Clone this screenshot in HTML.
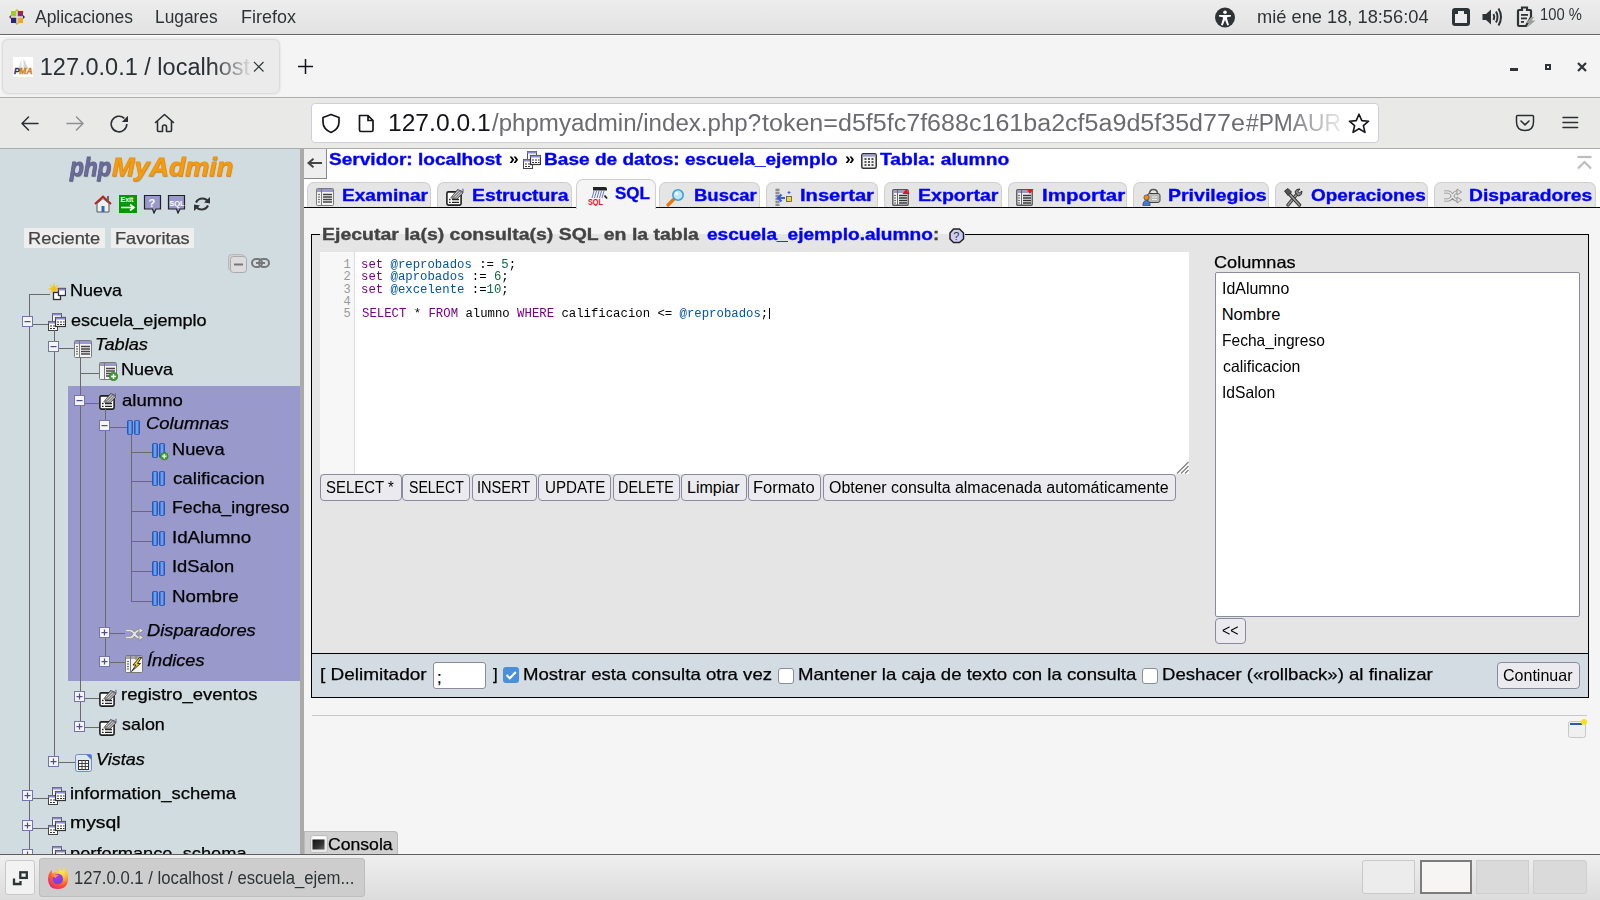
<!DOCTYPE html>
<html><head><meta charset="utf-8"><title>phpMyAdmin</title>
<style>
html,body{margin:0;padding:0;width:1600px;height:900px;overflow:hidden;background:#f5f5f5;font-family:"Liberation Sans",sans-serif;}
.a{position:absolute;box-sizing:border-box;}
.t{position:absolute;white-space:nowrap;line-height:1;transform-origin:0 0;}
</style></head><body>
<div class="a" style="left:0px;top:0px;width:1600px;height:34px;background:linear-gradient(#ededed,#e2e2e2);"></div>
<div class="a" style="left:0px;top:34px;width:1600px;height:1px;background:#666666;"></div>
<div class="a" style="left:0px;top:35px;width:1600px;height:1px;background:#ffffff;"></div>
<svg class="a" style="left:8px;top:8px;" width="18" height="18" viewBox="0 0 18 18">
<g transform="rotate(45 9 9)">
<polygon points="9,0 11,2 7,2" fill="#efa724"/>
</g>
<polygon points="9,1 11,3 7,3" fill="#efa724"/>
<polygon points="9,17 11,15 7,15" fill="#9ccd2a"/>
<polygon points="1,9 3,7 3,11" fill="#932279"/>
<polygon points="17,9 15,7 15,11" fill="#262577"/>
<rect x="3" y="3" width="5.5" height="5.5" fill="#9ccd2a"/>
<rect x="9.5" y="3" width="5.5" height="5.5" fill="#932279"/>
<rect x="3" y="9.5" width="5.5" height="5.5" fill="#262577"/>
<rect x="9.5" y="9.5" width="5.5" height="5.5" fill="#efa724"/>
<rect x="3" y="8.5" width="12" height="1" fill="#ddd"/>
<rect x="8.5" y="3" width="1" height="12" fill="#ddd"/>
</svg>
<span class="t" style="left:35.10px;top:8px;color:#2e3436;font-size:18.5px;font-family:'Liberation Sans',sans-serif;transform:scaleX(0.9437);">Aplicaciones</span>
<span class="t" style="left:154.66px;top:8px;color:#2e3436;font-size:18.5px;font-family:'Liberation Sans',sans-serif;transform:scaleX(0.9369);">Lugares</span>
<span class="t" style="left:240.93px;top:8px;color:#2e3436;font-size:18.5px;font-family:'Liberation Sans',sans-serif;transform:scaleX(0.9709);">Firefox</span>
<svg class="a" style="left:1214px;top:7px;" width="22" height="22" viewBox="0 0 22 22"><circle cx="11" cy="10.5" r="10" fill="#2e3436"/>
<circle cx="11" cy="5.3" r="1.8" fill="#fff"/>
<path d="M5,8 L17,8 L17,9.6 L13,10.2 L13.2,12 L15,18 L13.3,18.4 L11,13 L8.7,18.4 L7,18 L8.8,12 L9,10.2 L5,9.6Z" fill="#fff"/></svg>
<span class="t" style="left:1257.01px;top:8px;color:#2e3436;font-size:18.5px;font-family:'Liberation Sans',sans-serif;transform:scaleX(0.9870);">mié ene 18, 18:56:04</span>
<svg class="a" style="left:1451px;top:7px;" width="20" height="20" viewBox="0 0 20 20"><rect x="1" y="1" width="18" height="18" rx="3" fill="#2e3436"/><path d="M4,7 L7,7 L7,4 L13,4 L13,7 L16,7 L16,16 L4,16Z" fill="#ececec"/></svg>
<svg class="a" style="left:1481px;top:7px;" width="23" height="20" viewBox="0 0 23 20"><path d="M1.5,7 L5,7 L10,2.5 L10,17.5 L5,13 L1.5,13Z" fill="#2e3436"/>
<path d="M12.5,7 Q14,10 12.5,13" stroke="#2e3436" stroke-width="2" fill="none"/>
<path d="M15,4.5 Q18,10 15,15.5" stroke="#2e3436" stroke-width="2" fill="none"/>
<path d="M17.5,1.5 Q22.5,10 17.5,18.5" stroke="#2e3436" stroke-width="2" fill="none"/></svg>
<svg class="a" style="left:1516px;top:6px;" width="21" height="22" viewBox="0 0 21 22"><path d="M3,4 L6,4 L6,1.5 L11,1.5 L11,4 L14,4 Q15,4 15,5 L15,11 L10,20 L3,20 Q2,20 2,19 L2,5 Q2,4 3,4Z" fill="none" stroke="#2e3436" stroke-width="2.2"/>
<rect x="5" y="8" width="7" height="1.8" fill="#2e3436"/><rect x="5" y="11.5" width="6" height="1.8" fill="#2e3436"/><rect x="5" y="15" width="3" height="1.8" fill="#2e3436"/>
<path d="M15.5,11 L10,17 L13.5,17 L11,21.5 L19.5,14.5 L15.5,14.5 L18,11Z" fill="#9a9c98"/></svg>
<span class="t" style="left:1539.58px;top:7px;color:#2e3436;font-size:16px;font-family:'Liberation Sans',sans-serif;transform:scaleX(0.9205);">100 %</span>
<div class="a" style="left:0px;top:36px;width:1600px;height:61px;background:#f4f4f4;"></div>
<div class="a" style="left:3px;top:40px;width:276px;height:53px;background:#ebebeb;border-radius:5px;box-shadow:0 0 3px rgba(0,0,0,.28);"></div>
<div class="a" style="left:0px;top:97px;width:1600px;height:1px;background:#adadad;"></div>
<div class="a" style="left:0px;top:98px;width:1600px;height:50px;background:#e9e9e8;"></div>
<div class="a" style="left:0px;top:148px;width:1600px;height:1px;background:#acacac;"></div>
<svg class="a" style="left:13px;top:57px;" width="20" height="20" viewBox="0 0 20 20"><rect x="0" y="0" width="20" height="20" fill="#fff"/>
<path d="M8.5,2 L5,12 L8.5,12Z" fill="#dedede"/><path d="M10.5,1.5 L10.5,12 L15.5,12Z" fill="#d6d6d6"/>
<text x="1" y="17.3" font-family="Liberation Sans" font-weight="700" font-style="italic" font-size="8.5" fill="#2f2f6e" stroke="#2f2f6e" stroke-width="0.3">P</text>
<text x="6.3" y="17.3" font-family="Liberation Sans" font-weight="700" font-style="italic" font-size="8.5" fill="#e88a0c" stroke="#b86a00" stroke-width="0.3">MA</text></svg>
<div class="a" style="left:0;top:35px;width:290px;height:62px;-webkit-mask-image:linear-gradient(90deg,#000 212px,rgba(0,0,0,.08) 250px);mask-image:linear-gradient(90deg,#000 212px,rgba(0,0,0,.08) 250px);">
<span class="t" style="left:39.75px;top:21px;color:#2b3033;font-size:23.5px;font-family:'Liberation Sans',sans-serif;">127.0.0.1 / localhost</span>
</div>
<svg class="a" style="left:253px;top:61px;" width="12" height="12" viewBox="0 0 12 12"><path d="M1,1 L10.5,10.5 M10.5,1 L1,10.5" stroke="#2e3436" stroke-width="1.1"/></svg>
<svg class="a" style="left:297px;top:58px;" width="17" height="17" viewBox="0 0 17 17"><path d="M8.5,1 L8.5,16 M1,8.5 L16,8.5" stroke="#15141a" stroke-width="1.5"/></svg>
<div class="a" style="left:1510px;top:68px;width:8px;height:3px;background:#2e3436;"></div>
<div class="a" style="left:1545px;top:64px;width:6px;height:6px;border:2px solid #2e3436;"></div>
<svg class="a" style="left:1577px;top:62px;" width="10" height="10" viewBox="0 0 10 10"><path d="M1,1 L9,9 M9,1 L1,9" stroke="#2e3436" stroke-width="2.2"/></svg>
<svg class="a" style="left:19px;top:113px;" width="22" height="21" viewBox="0 0 22 21"><path d="M19,10.5 L3,10.5 M9.5,4 L3,10.5 L9.5,17" fill="none" stroke="#2b2f33" stroke-width="1.5" stroke-linejoin="round" stroke-linecap="round"/></svg>
<svg class="a" style="left:64px;top:113px;" width="22" height="21" viewBox="0 0 22 21"><path d="M3,10.5 L19,10.5 M12.5,4 L19,10.5 L12.5,17" fill="none" stroke="#8f9093" stroke-width="1.5" stroke-linejoin="round" stroke-linecap="round"/></svg>
<svg class="a" style="left:109px;top:113px;" width="22" height="22" viewBox="0 0 22 22"><path d="M17.8,11 A7.8,7.8 0 1 1 15.4,5.4" fill="none" stroke="#2b2f33" stroke-width="1.6"/><path d="M19,2.8 L19,9 L12.8,9Z" fill="#2b2f33"/></svg>
<svg class="a" style="left:153px;top:112px;" width="23" height="22" viewBox="0 0 23 22"><path d="M2.5,10.5 L11.5,2.5 L20.5,10.5 M4.5,9 L4.5,18.5 Q4.5,19.5 5.5,19.5 L9.5,19.5 L9.5,15 Q9.5,13 11.5,13 Q13.5,13 13.5,15 L13.5,19.5 L17.5,19.5 Q18.5,19.5 18.5,18.5 L18.5,9" fill="none" stroke="#2b2f33" stroke-width="1.6" stroke-linejoin="round" stroke-linecap="round"/></svg>
<div class="a" style="left:311px;top:103px;width:1068px;height:40px;background:#fff;border:1px solid #cfcfd8;border-radius:4px;"></div>
<svg class="a" style="left:320px;top:112px;" width="22" height="22" viewBox="0 0 22 22"><path d="M11,2.5 L19,5.5 L19,10 Q19,17 11,20.5 Q3,17 3,10 L3,5.5Z" fill="none" stroke="#15141a" stroke-width="1.7" stroke-linejoin="round"/></svg>
<svg class="a" style="left:357px;top:113px;" width="19" height="21" viewBox="0 0 19 21"><path d="M2.5,2.5 L11,2.5 L16,7.5 L16,17 Q16,18.5 14.5,18.5 L4,18.5 Q2.5,18.5 2.5,17Z M11,2.5 L11,7.5 L16,7.5" fill="none" stroke="#15141a" stroke-width="1.7" stroke-linejoin="round"/></svg>
<span class="t" style="left:388.45px;top:112px;color:#15141a;font-size:23.5px;font-family:'Liberation Sans',sans-serif;transform:scaleX(1.0469);">127.0.0.1</span>
<div class="a" style="left:0;top:98px;width:1345px;height:50px;-webkit-mask-image:linear-gradient(90deg,#000 1285px,rgba(0,0,0,.12) 1342px);mask-image:linear-gradient(90deg,#000 1285px,rgba(0,0,0,.12) 1342px);">
<span class="t" style="left:492.00px;top:14px;color:#6b6b70;font-size:23.5px;font-family:'Liberation Sans',sans-serif;transform:scaleX(1.0248);">/phpmyadmin/index.php?</span>
<span class="t" style="left:762.00px;top:14px;color:#6b6b70;font-size:23.5px;font-family:'Liberation Sans',sans-serif;transform:scaleX(1.0664);">token=d5f5fc7f688c161ba2cf5a9d5f35d77e</span>
<span class="t" style="left:1246.00px;top:14px;color:#6b6b70;font-size:23.5px;font-family:'Liberation Sans',sans-serif;transform:scaleX(0.9691);">#PMAUR</span>
</div>
<svg class="a" style="left:1347px;top:112px;" width="24" height="23" viewBox="0 0 24 23"><path d="M12,2.2 L14.8,8.6 L21.6,9.2 L16.4,13.7 L18,20.4 L12,16.8 L6,20.4 L7.6,13.7 L2.4,9.2 L9.2,8.6Z" fill="none" stroke="#15141a" stroke-width="1.6" stroke-linejoin="round"/></svg>
<svg class="a" style="left:1514px;top:113px;" width="22" height="20" viewBox="0 0 22 20"><path d="M3.5,2.5 L18.5,2.5 Q19.5,2.5 19.5,3.5 L19.5,9 Q19.5,17.5 11,17.5 Q2.5,17.5 2.5,9 L2.5,3.5 Q2.5,2.5 3.5,2.5Z" fill="none" stroke="#2b2f33" stroke-width="1.5"/><path d="M7,8 L11,11.8 L15,8" fill="none" stroke="#2b2f33" stroke-width="1.6" stroke-linecap="round" stroke-linejoin="round"/></svg>
<svg class="a" style="left:1561px;top:114px;" width="19" height="16" viewBox="0 0 19 16"><path d="M2,3.4 h14.6 M2,8.4 h14.6 M2,13.4 h14.6" stroke="#2b2f33" stroke-width="1.5" stroke-linecap="round"/></svg>
<div class="a" style="left:0px;top:149px;width:300px;height:706px;background:#d0dce0;"></div>
<div class="a" style="left:300px;top:149px;width:4px;height:706px;background:#aaaaaa;"></div>
<div class="a" style="left:304px;top:149px;width:1296px;height:706px;background:#f5f5f5;"></div>
<span class="t" style="left:69.85px;top:154px;color:#6c6c9c;font-size:26.5px;font-family:'Liberation Sans',sans-serif;font-weight:700;font-style:italic;transform:scaleX(0.8490);-webkit-text-stroke:1px #63638f;text-shadow:0.5px 0.5px 1px rgba(0,0,0,.45);">php</span>
<span class="t" style="left:111.50px;top:154px;color:#f89c0e;font-size:26.5px;font-family:'Liberation Sans',sans-serif;font-weight:700;font-style:italic;transform:scaleX(1.0169);-webkit-text-stroke:1px #e8920e;text-shadow:0.5px 0.5px 1px rgba(90,50,0,.5);">MyAdmin</span>
<svg class="a" style="left:94px;top:195px;" width="18" height="18" viewBox="0 0 18 18"><path d="M1,9 L9,1.5 L17,9" fill="none" stroke="#c0201a" stroke-width="2"/><rect x="13" y="1" width="2" height="5" fill="#666"/>
<path d="M3,8.5 L9,3.5 L15,8.5 L15,17 L3,17Z" fill="#f0f0f0" stroke="#555" stroke-width="1"/><rect x="7.5" y="11" width="3" height="6" fill="#2f6db5"/></svg>
<svg class="a" style="left:119px;top:195px;" width="18" height="18" viewBox="0 0 18 18"><rect x="0" y="0" width="18" height="18" fill="#009a00"/><text x="1.5" y="7.2" font-family="Liberation Sans" font-weight="700" font-size="7" fill="#fff">Exit</text>
<path d="M2,12.5 L14,12.5 M11,9.5 L15,12.5 L11,15.5" fill="none" stroke="#fff" stroke-width="1.6"/></svg>
<svg class="a" style="left:143px;top:194px;" width="19" height="20" viewBox="0 0 19 20"><path d="M1.5,1.5 L17.5,1.5 L17.5,15 L13,15 L11,19 L9.5,15 L1.5,15Z" fill="#9999cc" stroke="#222" stroke-width="1.2"/>
<text x="5.5" y="12.5" font-family="Liberation Sans" font-weight="700" font-size="11" fill="#fff">?</text></svg>
<svg class="a" style="left:167px;top:194px;" width="19" height="20" viewBox="0 0 19 20"><path d="M1.5,1.5 L17.5,1.5 L17.5,15 L13,15 L11,19 L9.5,15 L1.5,15Z" fill="#9999cc" stroke="#222" stroke-width="1.2"/>
<text x="2.2" y="11.5" font-family="Liberation Sans" font-weight="700" font-size="7.5" fill="#fff">SQL</text></svg>
<svg class="a" style="left:193px;top:196px;" width="18" height="16" viewBox="0 0 18 16"><path d="M3,6.5 Q5,2.5 9.5,2.5 Q13,2.5 14.5,5" fill="none" stroke="#333" stroke-width="2.2"/><path d="M17,1 L17,7.5 L11,6.5Z" fill="#333"/>
<path d="M15,9.5 Q13,13.5 8.5,13.5 Q5,13.5 3.5,11" fill="none" stroke="#333" stroke-width="2.2"/><path d="M1,15 L1,8.5 L7,9.5Z" fill="#333"/></svg>
<div class="a" style="left:24px;top:228px;width:81px;height:20px;background:#eeeeee;"></div>
<span class="t" style="left:27.79px;top:230px;color:#444;font-size:16.5px;font-family:'Liberation Sans',sans-serif;transform:scaleX(1.1063);-webkit-text-stroke-width:0.25px;">Reciente</span>
<div class="a" style="left:111px;top:228px;width:83px;height:20px;background:#eeeeee;"></div>
<span class="t" style="left:114.50px;top:230px;color:#444;font-size:16.5px;font-family:'Liberation Sans',sans-serif;transform:scaleX(1.1000);-webkit-text-stroke-width:0.25px;">Favoritas</span>
<svg class="a" style="left:227px;top:253px;" width="21" height="21" viewBox="0 0 21 21"><rect x="1.5" y="1.5" width="16" height="16" rx="3" fill="#d0d0d0" stroke="#b8b8b8"/><rect x="3.5" y="3.5" width="16" height="16" rx="3" fill="#dcdcdc" stroke="#aaa"/><rect x="7" y="10.5" width="9" height="2" fill="#777"/></svg>
<svg class="a" style="left:251px;top:257px;" width="20" height="12" viewBox="0 0 20 12"><rect x="1" y="2" width="10" height="8" rx="4" fill="none" stroke="#777" stroke-width="2"/><rect x="8" y="2" width="10" height="8" rx="4" fill="none" stroke="#777" stroke-width="2"/><rect x="5" y="5" width="9" height="2" fill="#777"/></svg>
<div class="a" style="left:29px;top:294px;width:1px;height:559px;background:#6a6a6a;"></div>
<div class="a" style="left:29px;top:294px;width:21px;height:1px;background:#6a6a6a;"></div>
<svg class="a" style="left:47px;top:282px;" width="19" height="19" viewBox="0 0 19 19"><path d="M7,0 L8,5 L12,2 L9,6 L14,7 L9,8 L12,12 L8,9 L7,14 L6,9 L2,12 L5,8 L0,7 L5,6 L2,2 L6,5Z" fill="#f5c211"/>
<rect x="6.5" y="10.5" width="7" height="7" fill="#fff" stroke="#333" stroke-width="1.3"/><rect x="11.5" y="6.5" width="7" height="7" fill="#fff" stroke="#333" stroke-width="1.3"/><rect x="11.5" y="6.5" width="7" height="2" fill="#8c8ccc"/></svg>
<span class="t" style="left:69.71px;top:282px;color:#000;font-size:16.5px;font-family:'Liberation Sans',sans-serif;transform:scaleX(1.0894);-webkit-text-stroke-width:0.25px;">Nueva</span>
<div class="a" style="left:33px;top:324px;width:16px;height:1px;background:#6a6a6a;"></div>
<svg class="a" style="left:22px;top:316px;" width="11" height="11" viewBox="0 0 11 11"><rect x="0.5" y="0.5" width="10" height="10" fill="#f4f4fa" stroke="#7474b0"/><rect x="2.5" y="5" width="6" height="1.2" fill="#505080"/></svg>
<svg class="a" style="left:48px;top:313px;" width="18" height="18" viewBox="0 0 18 18"><rect x="4.5" y="0.5" width="9" height="8" fill="#fff" stroke="#555"/><rect x="4.5" y="0.5" width="9" height="2" fill="#8c8ccc"/>
<rect x="0.5" y="8.5" width="9" height="9" fill="#fff" stroke="#444"/><rect x="0.5" y="8.5" width="9" height="2" fill="#8c8ccc"/>
<rect x="7.5" y="4.5" width="10" height="9" fill="#fff" stroke="#333" stroke-width="1.2"/><rect x="7.5" y="4.5" width="10" height="2" fill="#8c8ccc"/>
<path d="M9,9 h2 M12,9 h2 M15,9 h1.5 M9,11.5 h2 M12,11.5 h2 M15,11.5 h1.5 M2,13 h2 M5,13 h2 M2,15.5 h2 M5,15.5 h2" stroke="#333" stroke-width="1"/></svg>
<span class="t" style="left:70.80px;top:312px;color:#000;font-size:16.5px;font-family:'Liberation Sans',sans-serif;transform:scaleX(1.0952);-webkit-text-stroke-width:0.25px;">escuela_ejemplo</span>
<div class="a" style="left:54px;top:330px;width:1px;height:430px;background:#6a6a6a;"></div>
<div class="a" style="left:59px;top:348px;width:15px;height:1px;background:#6a6a6a;"></div>
<svg class="a" style="left:48px;top:341px;" width="11" height="11" viewBox="0 0 11 11"><rect x="0.5" y="0.5" width="10" height="10" fill="#f4f4fa" stroke="#7474b0"/><rect x="2.5" y="5" width="6" height="1.2" fill="#505080"/></svg>
<svg class="a" style="left:74px;top:340px;" width="18" height="18" viewBox="0 0 18 18"><rect x="0.5" y="0.5" width="17" height="17" rx="1" fill="#f4f4f4" stroke="#7a7a7a"/>
<rect x="1" y="1" width="16" height="3" fill="#9999d0"/><rect x="5" y="1" width="1" height="16" fill="#7a7a7a"/>
<path d="M7,6.5 h9 M7,9 h9 M7,11.5 h9 M7,14 h9" stroke="#444" stroke-width="1.4"/>
<path d="M3,6.5 v0.1 M3,9 v0.1 M3,11.5 v0.1 M3,14 v0.1" stroke="#333" stroke-width="1.5" stroke-linecap="round"/></svg>
<span class="t" style="left:95.10px;top:336px;color:#000;font-size:16.5px;font-family:'Liberation Sans',sans-serif;font-style:italic;transform:scaleX(1.1021);-webkit-text-stroke-width:0.25px;">Tablas</span>
<div class="a" style="left:80px;top:357px;width:1px;height:369px;background:#6a6a6a;"></div>
<div class="a" style="left:80px;top:373px;width:19px;height:1px;background:#6a6a6a;"></div>
<svg class="a" style="left:99px;top:362px;" width="19" height="19" viewBox="0 0 19 19"><rect x="0.5" y="0.5" width="17" height="17" rx="1" fill="#f4f4f4" stroke="#7a7a7a"/>
<rect x="1" y="1" width="16" height="3" fill="#9999d0"/><rect x="5" y="1" width="1" height="16" fill="#7a7a7a"/>
<path d="M7,6.5 h9 M7,9 h9 M7,11.5 h6 M7,14 h5" stroke="#444" stroke-width="1.4"/>
<circle cx="14.5" cy="14.5" r="4.2" fill="#3d9a2f" stroke="#2a7a20" stroke-width="0.6"/><path d="M14.5,12 v5 M12,14.5 h5" stroke="#fff" stroke-width="1.5"/></svg>
<span class="t" style="left:120.91px;top:361px;color:#000;font-size:16.5px;font-family:'Liberation Sans',sans-serif;transform:scaleX(1.0936);-webkit-text-stroke-width:0.25px;">Nueva</span>
<div class="a" style="left:68px;top:386px;width:232px;height:295px;background:#9999cc;"></div>
<div class="a" style="left:80px;top:386px;width:1px;height:340px;background:#6a6a6a;"></div>
<div class="a" style="left:85px;top:403px;width:14px;height:1px;background:#6a6a6a;"></div>
<svg class="a" style="left:74px;top:395px;" width="11" height="11" viewBox="0 0 11 11"><rect x="0.5" y="0.5" width="10" height="10" fill="#f4f4fa" stroke="#7474b0"/><rect x="2.5" y="5" width="6" height="1.2" fill="#505080"/></svg>
<svg class="a" style="left:99px;top:392px;" width="18" height="18" viewBox="0 0 18 18"><rect x="0.9" y="3.9" width="14.2" height="13.2" rx="1.5" fill="#fff" stroke="#1e1e1e" stroke-width="1.6"/>
<path d="M3,11.5 h1.6 M6,11.5 h7 M3,14.3 h1.6 M6,14.3 h7" stroke="#222" stroke-width="1.3"/>
<path d="M5,9.5 L11.5,1.5 L17,3.5 L17,5 L11,11 L6.5,11Z" fill="#8a8a8a" stroke="#333" stroke-width="0.7"/>
<path d="M7,8 L12.5,2.5 M8.5,9.5 L14,4 M10,10.5 L15.5,5" stroke="#d8d8d8" stroke-width="0.8"/>
<path d="M16.5,1 L17.5,1 L17.5,5" stroke="#9a9ae0" stroke-width="1"/></svg>
<span class="t" style="left:122.00px;top:392px;color:#000;font-size:16.5px;font-family:'Liberation Sans',sans-serif;transform:scaleX(1.1241);-webkit-text-stroke-width:0.25px;">alumno</span>
<div class="a" style="left:105px;top:409px;width:1px;height:253px;background:#6a6a6a;"></div>
<div class="a" style="left:110px;top:427px;width:17px;height:1px;background:#6a6a6a;"></div>
<svg class="a" style="left:99px;top:420px;" width="11" height="11" viewBox="0 0 11 11"><rect x="0.5" y="0.5" width="10" height="10" fill="#f4f4fa" stroke="#7474b0"/><rect x="2.5" y="5" width="6" height="1.2" fill="#505080"/></svg>
<svg class="a" style="left:127px;top:420px;" width="17" height="18" viewBox="0 0 17 18"><defs><linearGradient id="cg" x1="0" x2="1"><stop offset="0" stop-color="#1d56c4"/><stop offset=".5" stop-color="#7fb2f5"/><stop offset="1" stop-color="#1d56c4"/></linearGradient></defs>
<rect x="0.5" y="0.5" width="5" height="14" rx="1" fill="url(#cg)" stroke="#1f4fae" stroke-width="0.8"/>
<rect x="7.5" y="0.5" width="5" height="14" rx="1" fill="url(#cg)" stroke="#1f4fae" stroke-width="0.8"/></svg>
<span class="t" style="left:146.28px;top:415px;color:#000;font-size:16.5px;font-family:'Liberation Sans',sans-serif;font-style:italic;transform:scaleX(1.1178);-webkit-text-stroke-width:0.25px;">Columnas</span>
<div class="a" style="left:131px;top:435px;width:1px;height:166px;background:#6a6a6a;"></div>
<div class="a" style="left:131px;top:452px;width:21px;height:1px;background:#6a6a6a;"></div>
<svg class="a" style="left:152px;top:443px;" width="17" height="18" viewBox="0 0 17 18"><defs><linearGradient id="cg" x1="0" x2="1"><stop offset="0" stop-color="#1d56c4"/><stop offset=".5" stop-color="#7fb2f5"/><stop offset="1" stop-color="#1d56c4"/></linearGradient></defs>
<rect x="0.5" y="0.5" width="5" height="14" rx="1" fill="url(#cg)" stroke="#1f4fae" stroke-width="0.8"/>
<rect x="7.5" y="0.5" width="5" height="14" rx="1" fill="url(#cg)" stroke="#1f4fae" stroke-width="0.8"/><circle cx="12.3" cy="13.2" r="3.8" fill="#45a234" stroke="#2d7a20" stroke-width="0.6"/><path d="M12.3,11 v4.4 M10.1,13.2 h4.4" stroke="#fff" stroke-width="1.3"/></svg>
<span class="t" style="left:171.70px;top:441px;color:#000;font-size:16.5px;font-family:'Liberation Sans',sans-serif;transform:scaleX(1.1021);-webkit-text-stroke-width:0.25px;">Nueva</span>
<div class="a" style="left:131px;top:481px;width:21px;height:1px;background:#6a6a6a;"></div>
<svg class="a" style="left:152px;top:471px;" width="17" height="18" viewBox="0 0 17 18"><defs><linearGradient id="cg" x1="0" x2="1"><stop offset="0" stop-color="#1d56c4"/><stop offset=".5" stop-color="#7fb2f5"/><stop offset="1" stop-color="#1d56c4"/></linearGradient></defs>
<rect x="0.5" y="0.5" width="5" height="14" rx="1" fill="url(#cg)" stroke="#1f4fae" stroke-width="0.8"/>
<rect x="7.5" y="0.5" width="5" height="14" rx="1" fill="url(#cg)" stroke="#1f4fae" stroke-width="0.8"/></svg>
<span class="t" style="left:172.80px;top:470px;color:#000;font-size:16.5px;font-family:'Liberation Sans',sans-serif;transform:scaleX(1.1350);-webkit-text-stroke-width:0.25px;">calificacion</span>
<div class="a" style="left:131px;top:511px;width:21px;height:1px;background:#6a6a6a;"></div>
<svg class="a" style="left:152px;top:501px;" width="17" height="18" viewBox="0 0 17 18"><defs><linearGradient id="cg" x1="0" x2="1"><stop offset="0" stop-color="#1d56c4"/><stop offset=".5" stop-color="#7fb2f5"/><stop offset="1" stop-color="#1d56c4"/></linearGradient></defs>
<rect x="0.5" y="0.5" width="5" height="14" rx="1" fill="url(#cg)" stroke="#1f4fae" stroke-width="0.8"/>
<rect x="7.5" y="0.5" width="5" height="14" rx="1" fill="url(#cg)" stroke="#1f4fae" stroke-width="0.8"/></svg>
<span class="t" style="left:171.72px;top:499px;color:#000;font-size:16.5px;font-family:'Liberation Sans',sans-serif;transform:scaleX(1.0759);-webkit-text-stroke-width:0.25px;">Fecha_ingreso</span>
<div class="a" style="left:131px;top:541px;width:21px;height:1px;background:#6a6a6a;"></div>
<svg class="a" style="left:152px;top:531px;" width="17" height="18" viewBox="0 0 17 18"><defs><linearGradient id="cg" x1="0" x2="1"><stop offset="0" stop-color="#1d56c4"/><stop offset=".5" stop-color="#7fb2f5"/><stop offset="1" stop-color="#1d56c4"/></linearGradient></defs>
<rect x="0.5" y="0.5" width="5" height="14" rx="1" fill="url(#cg)" stroke="#1f4fae" stroke-width="0.8"/>
<rect x="7.5" y="0.5" width="5" height="14" rx="1" fill="url(#cg)" stroke="#1f4fae" stroke-width="0.8"/></svg>
<span class="t" style="left:171.66px;top:529px;color:#000;font-size:16.5px;font-family:'Liberation Sans',sans-serif;transform:scaleX(1.1353);-webkit-text-stroke-width:0.25px;">IdAlumno</span>
<div class="a" style="left:131px;top:571px;width:21px;height:1px;background:#6a6a6a;"></div>
<svg class="a" style="left:152px;top:561px;" width="17" height="18" viewBox="0 0 17 18"><defs><linearGradient id="cg" x1="0" x2="1"><stop offset="0" stop-color="#1d56c4"/><stop offset=".5" stop-color="#7fb2f5"/><stop offset="1" stop-color="#1d56c4"/></linearGradient></defs>
<rect x="0.5" y="0.5" width="5" height="14" rx="1" fill="url(#cg)" stroke="#1f4fae" stroke-width="0.8"/>
<rect x="7.5" y="0.5" width="5" height="14" rx="1" fill="url(#cg)" stroke="#1f4fae" stroke-width="0.8"/></svg>
<span class="t" style="left:171.69px;top:558px;color:#000;font-size:16.5px;font-family:'Liberation Sans',sans-serif;transform:scaleX(1.1093);-webkit-text-stroke-width:0.25px;">IdSalon</span>
<div class="a" style="left:131px;top:601px;width:21px;height:1px;background:#6a6a6a;"></div>
<svg class="a" style="left:152px;top:591px;" width="17" height="18" viewBox="0 0 17 18"><defs><linearGradient id="cg" x1="0" x2="1"><stop offset="0" stop-color="#1d56c4"/><stop offset=".5" stop-color="#7fb2f5"/><stop offset="1" stop-color="#1d56c4"/></linearGradient></defs>
<rect x="0.5" y="0.5" width="5" height="14" rx="1" fill="url(#cg)" stroke="#1f4fae" stroke-width="0.8"/>
<rect x="7.5" y="0.5" width="5" height="14" rx="1" fill="url(#cg)" stroke="#1f4fae" stroke-width="0.8"/></svg>
<span class="t" style="left:171.66px;top:588px;color:#000;font-size:16.5px;font-family:'Liberation Sans',sans-serif;transform:scaleX(1.1368);-webkit-text-stroke-width:0.25px;">Nombre</span>
<div class="a" style="left:110px;top:633px;width:15px;height:1px;background:#6a6a6a;"></div>
<svg class="a" style="left:99px;top:627px;" width="11" height="11" viewBox="0 0 11 11"><rect x="0.5" y="0.5" width="10" height="10" fill="#f4f4fa" stroke="#7474b0"/><rect x="2.5" y="5" width="6" height="1.2" fill="#505080"/><rect x="4.9" y="2.5" width="1.2" height="6" fill="#505080"/></svg>
<svg class="a" style="left:125px;top:627px;" width="19" height="14" viewBox="0 0 19 14"><path d="M1,3.5 L5,3.5 Q7.5,3.5 9.5,7 Q11.5,10.5 14,10.5 L15,10.5 M1,10.5 L5,10.5 Q7.5,10.5 9.5,7 Q11.5,3.5 14,3.5 L15,3.5" fill="none" stroke="#8c8c8c" stroke-width="3.2"/>
<path d="M1,3.5 L5,3.5 Q7.5,3.5 9.5,7 Q11.5,10.5 14,10.5 L15,10.5 M1,10.5 L5,10.5 Q7.5,10.5 9.5,7 Q11.5,3.5 14,3.5 L15,3.5" fill="none" stroke="#e6e6e6" stroke-width="1.6"/>
<path d="M14,0.5 L18.5,3.5 L14,6.5Z M14,7.5 L18.5,10.5 L14,13.5Z" fill="#e6e6e6" stroke="#8c8c8c" stroke-width="0.9"/></svg>
<span class="t" style="left:147.20px;top:622px;color:#000;font-size:16.5px;font-family:'Liberation Sans',sans-serif;font-style:italic;transform:scaleX(1.1082);-webkit-text-stroke-width:0.25px;">Disparadores</span>
<div class="a" style="left:110px;top:662px;width:15px;height:1px;background:#6a6a6a;"></div>
<svg class="a" style="left:99px;top:656px;" width="11" height="11" viewBox="0 0 11 11"><rect x="0.5" y="0.5" width="10" height="10" fill="#f4f4fa" stroke="#7474b0"/><rect x="2.5" y="5" width="6" height="1.2" fill="#505080"/><rect x="4.9" y="2.5" width="1.2" height="6" fill="#505080"/></svg>
<svg class="a" style="left:125px;top:655px;" width="18" height="18" viewBox="0 0 18 18"><rect x="0.5" y="0.5" width="17" height="17" rx="1" fill="#f4f4f4" stroke="#777"/><rect x="1" y="1" width="16" height="3" fill="#a6a6a6"/>
<rect x="5" y="1" width="1" height="16" fill="#777"/><rect x="10.5" y="1" width="1" height="4" fill="#777"/>
<path d="M3,6.5 v0.1 M3,9 v0.1 M3,11.5 v0.1 M3,14 v0.1" stroke="#333" stroke-width="1.5" stroke-linecap="round"/>
<path d="M14.5,2.5 L8,10 L11,10 L6.5,16.5 L15.5,8.5 L12.5,8.5 L16.5,2.5Z" fill="#f7d10f" stroke="#222" stroke-width="0.9"/></svg>
<span class="t" style="left:147.20px;top:652px;color:#000;font-size:16.5px;font-family:'Liberation Sans',sans-serif;font-style:italic;transform:scaleX(1.1000);-webkit-text-stroke-width:0.25px;">Índices</span>
<div class="a" style="left:85px;top:698px;width:14px;height:1px;background:#6a6a6a;"></div>
<svg class="a" style="left:74px;top:691px;" width="11" height="11" viewBox="0 0 11 11"><rect x="0.5" y="0.5" width="10" height="10" fill="#f4f4fa" stroke="#7474b0"/><rect x="2.5" y="5" width="6" height="1.2" fill="#505080"/><rect x="4.9" y="2.5" width="1.2" height="6" fill="#505080"/></svg>
<svg class="a" style="left:99px;top:689px;" width="18" height="18" viewBox="0 0 18 18"><rect x="0.9" y="3.9" width="14.2" height="13.2" rx="1.5" fill="#fff" stroke="#1e1e1e" stroke-width="1.6"/>
<path d="M3,11.5 h1.6 M6,11.5 h7 M3,14.3 h1.6 M6,14.3 h7" stroke="#222" stroke-width="1.3"/>
<path d="M5,9.5 L11.5,1.5 L17,3.5 L17,5 L11,11 L6.5,11Z" fill="#8a8a8a" stroke="#333" stroke-width="0.7"/>
<path d="M7,8 L12.5,2.5 M8.5,9.5 L14,4 M10,10.5 L15.5,5" stroke="#d8d8d8" stroke-width="0.8"/>
<path d="M16.5,1 L17.5,1 L17.5,5" stroke="#9a9ae0" stroke-width="1"/></svg>
<span class="t" style="left:120.88px;top:686px;color:#000;font-size:16.5px;font-family:'Liberation Sans',sans-serif;transform:scaleX(1.1182);-webkit-text-stroke-width:0.25px;">registro_eventos</span>
<div class="a" style="left:85px;top:727px;width:14px;height:1px;background:#6a6a6a;"></div>
<svg class="a" style="left:74px;top:721px;" width="11" height="11" viewBox="0 0 11 11"><rect x="0.5" y="0.5" width="10" height="10" fill="#f4f4fa" stroke="#7474b0"/><rect x="2.5" y="5" width="6" height="1.2" fill="#505080"/><rect x="4.9" y="2.5" width="1.2" height="6" fill="#505080"/></svg>
<svg class="a" style="left:99px;top:718px;" width="18" height="18" viewBox="0 0 18 18"><rect x="0.9" y="3.9" width="14.2" height="13.2" rx="1.5" fill="#fff" stroke="#1e1e1e" stroke-width="1.6"/>
<path d="M3,11.5 h1.6 M6,11.5 h7 M3,14.3 h1.6 M6,14.3 h7" stroke="#222" stroke-width="1.3"/>
<path d="M5,9.5 L11.5,1.5 L17,3.5 L17,5 L11,11 L6.5,11Z" fill="#8a8a8a" stroke="#333" stroke-width="0.7"/>
<path d="M7,8 L12.5,2.5 M8.5,9.5 L14,4 M10,10.5 L15.5,5" stroke="#d8d8d8" stroke-width="0.8"/>
<path d="M16.5,1 L17.5,1 L17.5,5" stroke="#9a9ae0" stroke-width="1"/></svg>
<span class="t" style="left:122.00px;top:716px;color:#000;font-size:16.5px;font-family:'Liberation Sans',sans-serif;transform:scaleX(1.0846);-webkit-text-stroke-width:0.25px;">salon</span>
<div class="a" style="left:59px;top:762px;width:16px;height:1px;background:#6a6a6a;"></div>
<svg class="a" style="left:48px;top:756px;" width="11" height="11" viewBox="0 0 11 11"><rect x="0.5" y="0.5" width="10" height="10" fill="#f4f4fa" stroke="#7474b0"/><rect x="2.5" y="5" width="6" height="1.2" fill="#505080"/><rect x="4.9" y="2.5" width="1.2" height="6" fill="#505080"/></svg>
<svg class="a" style="left:75px;top:754px;" width="17" height="18" viewBox="0 0 17 18"><rect x="0.5" y="0.5" width="16" height="17" rx="2" fill="#dde6f5" stroke="#6f8fc8"/>
<rect x="3.5" y="6.5" width="10" height="9" fill="#fff" stroke="#333"/><path d="M3.5,9.5 h10 M3.5,12.5 h10 M7,6.5 v9 M10.3,6.5 v9" stroke="#333" stroke-width="0.9"/>
<path d="M11,0.5 L16.5,0.5 L16.5,6Z" fill="#4a7ad0"/></svg>
<span class="t" style="left:95.91px;top:751px;color:#000;font-size:16.5px;font-family:'Liberation Sans',sans-serif;font-style:italic;transform:scaleX(1.0909);-webkit-text-stroke-width:0.25px;">Vistas</span>
<div class="a" style="left:33px;top:798px;width:16px;height:1px;background:#6a6a6a;"></div>
<svg class="a" style="left:22px;top:790px;" width="11" height="11" viewBox="0 0 11 11"><rect x="0.5" y="0.5" width="10" height="10" fill="#f4f4fa" stroke="#7474b0"/><rect x="2.5" y="5" width="6" height="1.2" fill="#505080"/><rect x="4.9" y="2.5" width="1.2" height="6" fill="#505080"/></svg>
<svg class="a" style="left:48px;top:787px;" width="18" height="18" viewBox="0 0 18 18"><rect x="4.5" y="0.5" width="9" height="8" fill="#fff" stroke="#555"/><rect x="4.5" y="0.5" width="9" height="2" fill="#8c8ccc"/>
<rect x="0.5" y="8.5" width="9" height="9" fill="#fff" stroke="#444"/><rect x="0.5" y="8.5" width="9" height="2" fill="#8c8ccc"/>
<rect x="7.5" y="4.5" width="10" height="9" fill="#fff" stroke="#333" stroke-width="1.2"/><rect x="7.5" y="4.5" width="10" height="2" fill="#8c8ccc"/>
<path d="M9,9 h2 M12,9 h2 M15,9 h1.5 M9,11.5 h2 M12,11.5 h2 M15,11.5 h1.5 M2,13 h2 M5,13 h2 M2,15.5 h2 M5,15.5 h2" stroke="#333" stroke-width="1"/></svg>
<span class="t" style="left:69.88px;top:785px;color:#000;font-size:16.5px;font-family:'Liberation Sans',sans-serif;transform:scaleX(1.1182);-webkit-text-stroke-width:0.25px;">information_schema</span>
<div class="a" style="left:33px;top:828px;width:16px;height:1px;background:#6a6a6a;"></div>
<svg class="a" style="left:22px;top:820px;" width="11" height="11" viewBox="0 0 11 11"><rect x="0.5" y="0.5" width="10" height="10" fill="#f4f4fa" stroke="#7474b0"/><rect x="2.5" y="5" width="6" height="1.2" fill="#505080"/><rect x="4.9" y="2.5" width="1.2" height="6" fill="#505080"/></svg>
<svg class="a" style="left:48px;top:817px;" width="18" height="18" viewBox="0 0 18 18"><rect x="4.5" y="0.5" width="9" height="8" fill="#fff" stroke="#555"/><rect x="4.5" y="0.5" width="9" height="2" fill="#8c8ccc"/>
<rect x="0.5" y="8.5" width="9" height="9" fill="#fff" stroke="#444"/><rect x="0.5" y="8.5" width="9" height="2" fill="#8c8ccc"/>
<rect x="7.5" y="4.5" width="10" height="9" fill="#fff" stroke="#333" stroke-width="1.2"/><rect x="7.5" y="4.5" width="10" height="2" fill="#8c8ccc"/>
<path d="M9,9 h2 M12,9 h2 M15,9 h1.5 M9,11.5 h2 M12,11.5 h2 M15,11.5 h1.5 M2,13 h2 M5,13 h2 M2,15.5 h2 M5,15.5 h2" stroke="#333" stroke-width="1"/></svg>
<span class="t" style="left:69.82px;top:814px;color:#000;font-size:16.5px;font-family:'Liberation Sans',sans-serif;transform:scaleX(1.1756);-webkit-text-stroke-width:0.25px;">mysql</span>
<div class="a" style="left:33px;top:857px;width:16px;height:1px;background:#6a6a6a;"></div>
<svg class="a" style="left:22px;top:849px;" width="11" height="11" viewBox="0 0 11 11"><rect x="0.5" y="0.5" width="10" height="10" fill="#f4f4fa" stroke="#7474b0"/><rect x="2.5" y="5" width="6" height="1.2" fill="#505080"/><rect x="4.9" y="2.5" width="1.2" height="6" fill="#505080"/></svg>
<svg class="a" style="left:48px;top:846px;" width="18" height="18" viewBox="0 0 18 18"><rect x="4.5" y="0.5" width="9" height="8" fill="#fff" stroke="#555"/><rect x="4.5" y="0.5" width="9" height="2" fill="#8c8ccc"/>
<rect x="0.5" y="8.5" width="9" height="9" fill="#fff" stroke="#444"/><rect x="0.5" y="8.5" width="9" height="2" fill="#8c8ccc"/>
<rect x="7.5" y="4.5" width="10" height="9" fill="#fff" stroke="#333" stroke-width="1.2"/><rect x="7.5" y="4.5" width="10" height="2" fill="#8c8ccc"/>
<path d="M9,9 h2 M12,9 h2 M15,9 h1.5 M9,11.5 h2 M12,11.5 h2 M15,11.5 h1.5 M2,13 h2 M5,13 h2 M2,15.5 h2 M5,15.5 h2" stroke="#333" stroke-width="1"/></svg>
<span class="t" style="left:69.89px;top:845px;color:#000;font-size:16.5px;font-family:'Liberation Sans',sans-serif;transform:scaleX(1.1069);-webkit-text-stroke-width:0.25px;">performance_schema</span>
<div class="a" style="left:304px;top:149px;width:1296px;height:59px;background:#fff;"></div>
<div class="a" style="left:304px;top:149px;width:23px;height:30px;background:#eeeeee;border-right:1px solid #8a8a8a;border-bottom:1px solid #8a8a8a;"></div>
<svg class="a" style="left:306px;top:157px;" width="18" height="12" viewBox="0 0 18 12"><path d="M16,6 L3,6 M7.5,1.8 L2.5,6 L7.5,10.2" fill="none" stroke="#444" stroke-width="2"/></svg>
<span class="t" style="left:329.20px;top:151px;color:#0000ff;font-size:16.5px;font-family:'Liberation Sans',sans-serif;font-weight:700;transform:scaleX(1.1553);-webkit-text-stroke:0.35px #0000ff;">Servidor: localhost</span>
<span class="t" style="left:509.44px;top:150px;color:#000;font-size:16.5px;font-family:'Liberation Sans',sans-serif;font-weight:700;transform:scaleX(1.0625);">»</span>
<svg class="a" style="left:523px;top:151px;" width="18" height="18" viewBox="0 0 18 18"><rect x="4.5" y="0.5" width="9" height="8" fill="#fff" stroke="#555"/><rect x="4.5" y="0.5" width="9" height="2" fill="#8c8ccc"/>
<rect x="0.5" y="8.5" width="9" height="9" fill="#fff" stroke="#444"/><rect x="0.5" y="8.5" width="9" height="2" fill="#8c8ccc"/>
<rect x="7.5" y="4.5" width="10" height="9" fill="#fff" stroke="#333" stroke-width="1.2"/><rect x="7.5" y="4.5" width="10" height="2" fill="#8c8ccc"/>
<path d="M9,9 h2 M12,9 h2 M15,9 h1.5 M9,11.5 h2 M12,11.5 h2 M15,11.5 h1.5 M2,13 h2 M5,13 h2 M2,15.5 h2 M5,15.5 h2" stroke="#333" stroke-width="1"/></svg>
<span class="t" style="left:544.44px;top:151px;color:#0000ff;font-size:16.5px;font-family:'Liberation Sans',sans-serif;font-weight:700;transform:scaleX(1.1557);-webkit-text-stroke:0.35px #0000ff;">Base de datos: escuela_ejemplo</span>
<span class="t" style="left:844.55px;top:150px;color:#000;font-size:16.5px;font-family:'Liberation Sans',sans-serif;font-weight:700;transform:scaleX(1.0500);">»</span>
<svg class="a" style="left:861px;top:153px;" width="16" height="16" viewBox="0 0 16 16"><rect x="0.8" y="0.8" width="14.4" height="14.4" rx="1.5" fill="#f4f4f4" stroke="#333" stroke-width="1.5"/><rect x="1.5" y="1.5" width="13" height="2.2" fill="#9c9cd4"/><path d="M3.5,6 h2 M7,6 h2 M10.5,6 h2 M3.5,9 h2 M7,9 h2 M10.5,9 h2 M3.5,12 h2 M7,12 h2 M10.5,12 h2" stroke="#222" stroke-width="1.6"/></svg>
<span class="t" style="left:880.40px;top:151px;color:#0000ff;font-size:16.5px;font-family:'Liberation Sans',sans-serif;font-weight:700;transform:scaleX(1.1691);-webkit-text-stroke:0.35px #0000ff;">Tabla: alumno</span>
<svg class="a" style="left:1576px;top:154px;" width="17" height="17" viewBox="0 0 17 17"><path d="M1.5,3 h14" stroke="#bdbdbd" stroke-width="2.2"/><path d="M2,14.5 L8.5,8 L15,14.5" fill="none" stroke="#bdbdbd" stroke-width="2.2"/></svg>
<div class="a" style="left:307px;top:182px;width:124px;height:25px;background:#e5e5e5;border:1px solid #cfcfcf;border-bottom:none;border-radius:7px 7px 0 0;"></div>
<svg class="a" style="left:316px;top:188px;" width="18" height="18" viewBox="0 0 18 18"><rect x="0.5" y="0.5" width="17" height="17" rx="1" fill="#f4f4f4" stroke="#7a7a7a"/>
<rect x="1" y="1" width="16" height="3" fill="#9999d0"/><rect x="5" y="1" width="1" height="16" fill="#7a7a7a"/>
<path d="M7,6.5 h9 M7,9 h9 M7,11.5 h9 M7,14 h9" stroke="#444" stroke-width="1.4"/>
<path d="M3,6.5 v0.1 M3,9 v0.1 M3,11.5 v0.1 M3,14 v0.1" stroke="#333" stroke-width="1.5" stroke-linecap="round"/></svg>
<span class="t" style="left:341.84px;top:187px;color:#0000ff;font-size:16.5px;font-family:'Liberation Sans',sans-serif;font-weight:700;transform:scaleX(1.1575);-webkit-text-stroke:0.35px #0000ff;">Examinar</span>
<div class="a" style="left:437px;top:182px;width:135px;height:25px;background:#e5e5e5;border:1px solid #cfcfcf;border-bottom:none;border-radius:7px 7px 0 0;"></div>
<svg class="a" style="left:446px;top:188px;" width="18" height="18" viewBox="0 0 18 18"><rect x="0.9" y="3.9" width="14.2" height="13.2" rx="1.5" fill="#fff" stroke="#1e1e1e" stroke-width="1.6"/>
<path d="M3,11.5 h1.6 M6,11.5 h7 M3,14.3 h1.6 M6,14.3 h7" stroke="#222" stroke-width="1.3"/>
<path d="M5,9.5 L11.5,1.5 L17,3.5 L17,5 L11,11 L6.5,11Z" fill="#8a8a8a" stroke="#333" stroke-width="0.7"/>
<path d="M7,8 L12.5,2.5 M8.5,9.5 L14,4 M10,10.5 L15.5,5" stroke="#d8d8d8" stroke-width="0.8"/>
<path d="M16.5,1 L17.5,1 L17.5,5" stroke="#9a9ae0" stroke-width="1"/></svg>
<span class="t" style="left:471.83px;top:187px;color:#0000ff;font-size:16.5px;font-family:'Liberation Sans',sans-serif;font-weight:700;transform:scaleX(1.1707);-webkit-text-stroke:0.35px #0000ff;">Estructura</span>
<div class="a" style="left:659px;top:182px;width:101px;height:25px;background:#e5e5e5;border:1px solid #cfcfcf;border-bottom:none;border-radius:7px 7px 0 0;"></div>
<svg class="a" style="left:666px;top:188px;" width="19" height="19" viewBox="0 0 19 19"><path d="M2,17 L8,11" stroke="#e8780a" stroke-width="3.2" stroke-linecap="round"/>
<circle cx="12" cy="7" r="5.2" fill="#bfe6fb" stroke="#3aa0e0" stroke-width="1.6"/><circle cx="10.5" cy="5.5" r="1.6" fill="#fff"/></svg>
<span class="t" style="left:693.88px;top:187px;color:#0000ff;font-size:16.5px;font-family:'Liberation Sans',sans-serif;font-weight:700;transform:scaleX(1.1218);-webkit-text-stroke:0.35px #0000ff;">Buscar</span>
<div class="a" style="left:766px;top:182px;width:112px;height:25px;background:#e5e5e5;border:1px solid #cfcfcf;border-bottom:none;border-radius:7px 7px 0 0;"></div>
<svg class="a" style="left:775px;top:188px;" width="18" height="18" viewBox="0 0 18 18"><rect x="0.5" y="0" width="4" height="18" fill="#c8c8c8"/><path d="M0.5,2 h4 M0.5,5 h4 M0.5,8 h4 M0.5,11 h4 M0.5,14 h4 M0.5,17 h4" stroke="#555" stroke-width="1"/>
<path d="M3,10 L10,10 M6.5,6.5 L3,10 L6.5,13.5" fill="none" stroke="#3a5fe0" stroke-width="2.2"/>
<rect x="11.5" y="8.5" width="5" height="5" fill="#f3d43a" stroke="#555" stroke-width="0.8"/><path d="M14,3 v3 M12.5,4.5 h3" stroke="#3a5fe0" stroke-width="1"/></svg>
<span class="t" style="left:800.48px;top:187px;color:#0000ff;font-size:16.5px;font-family:'Liberation Sans',sans-serif;font-weight:700;transform:scaleX(1.2217);-webkit-text-stroke:0.35px #0000ff;">Insertar</span>
<div class="a" style="left:884px;top:182px;width:118px;height:25px;background:#e5e5e5;border:1px solid #cfcfcf;border-bottom:none;border-radius:7px 7px 0 0;"></div>
<svg class="a" style="left:892px;top:188px;" width="18" height="18" viewBox="0 0 18 18"><rect x="0.8" y="1.8" width="15.4" height="15.4" rx="1" fill="#f4f4f4" stroke="#555" stroke-width="1.4"/>
<rect x="1.5" y="2.5" width="14" height="2.5" fill="#9999d0"/><rect x="5" y="2" width="1" height="15" fill="#666"/>
<path d="M7,7.5 h8 M7,10 h8 M7,12.5 h8 M7,15 h8" stroke="#333" stroke-width="1.3"/>
<path d="M3,7.5 v0.1 M3,10 v0.1 M3,12.5 v0.1 M3,15 v0.1" stroke="#333" stroke-width="1.5" stroke-linecap="round"/><path d="M10.5,6 L14,1 L17.5,6Z" fill="#e8141a"/></svg>
<span class="t" style="left:918.41px;top:187px;color:#0000ff;font-size:16.5px;font-family:'Liberation Sans',sans-serif;font-weight:700;transform:scaleX(1.1851);-webkit-text-stroke:0.35px #0000ff;">Exportar</span>
<div class="a" style="left:1008px;top:182px;width:119px;height:25px;background:#e5e5e5;border:1px solid #cfcfcf;border-bottom:none;border-radius:7px 7px 0 0;"></div>
<svg class="a" style="left:1016px;top:188px;" width="18" height="18" viewBox="0 0 18 18"><rect x="0.8" y="1.8" width="15.4" height="15.4" rx="1" fill="#f4f4f4" stroke="#555" stroke-width="1.4"/>
<rect x="1.5" y="2.5" width="14" height="2.5" fill="#9999d0"/><rect x="5" y="2" width="1" height="15" fill="#666"/>
<path d="M7,7.5 h8 M7,10 h8 M7,12.5 h8 M7,15 h8" stroke="#333" stroke-width="1.3"/>
<path d="M3,7.5 v0.1 M3,10 v0.1 M3,12.5 v0.1 M3,15 v0.1" stroke="#333" stroke-width="1.5" stroke-linecap="round"/><path d="M10.5,1 L14,6 L17.5,1Z" fill="#e8141a"/></svg>
<span class="t" style="left:1041.76px;top:187px;color:#0000ff;font-size:16.5px;font-family:'Liberation Sans',sans-serif;font-weight:700;transform:scaleX(1.2424);-webkit-text-stroke:0.35px #0000ff;">Importar</span>
<div class="a" style="left:1133px;top:182px;width:136px;height:25px;background:#e5e5e5;border:1px solid #cfcfcf;border-bottom:none;border-radius:7px 7px 0 0;"></div>
<svg class="a" style="left:1142px;top:188px;" width="19" height="18" viewBox="0 0 19 18"><path d="M7.5,6 Q7.5,1.5 11.5,1.5 Q15.5,1.5 15.5,6" fill="none" stroke="#555" stroke-width="1.6"/>
<rect x="5.5" y="5.5" width="12.5" height="9" rx="2" fill="#b8b8b8" stroke="#444" stroke-width="1"/><path d="M10,9 h5 M10,11.5 h5" stroke="#eee" stroke-width="1"/>
<circle cx="4.5" cy="9.5" r="2.6" fill="#f08a1c" stroke="#333" stroke-width="0.6"/><path d="M0.8,17.5 Q0.8,12.5 4.5,12.5 Q8.2,12.5 8.2,17.5Z" fill="#3d7bd8" stroke="#333" stroke-width="0.6"/></svg>
<span class="t" style="left:1167.82px;top:187px;color:#0000ff;font-size:16.5px;font-family:'Liberation Sans',sans-serif;font-weight:700;transform:scaleX(1.1829);-webkit-text-stroke:0.35px #0000ff;">Privilegios</span>
<div class="a" style="left:1275px;top:182px;width:153px;height:25px;background:#e5e5e5;border:1px solid #cfcfcf;border-bottom:none;border-radius:7px 7px 0 0;"></div>
<svg class="a" style="left:1284px;top:188px;" width="19" height="19" viewBox="0 0 19 19"><path d="M4,17 L13,6" stroke="#333" stroke-width="3.4" stroke-linecap="round"/><path d="M4,17 L13,6" stroke="#9a9a9a" stroke-width="1.6" stroke-linecap="round"/>
<path d="M11,4 Q12,0.5 16,1 L14,3.5 L15.5,5 L18,3 Q18.5,7 15,8 L13.5,7.5Z" fill="#8a8a8a" stroke="#222" stroke-width="0.9"/>
<path d="M3.5,4 L15.5,17" stroke="#333" stroke-width="3.4" stroke-linecap="round"/><path d="M3.5,4 L15.5,17" stroke="#9a9a9a" stroke-width="1.6" stroke-linecap="round"/>
<path d="M0.5,3 L4,0.5 L7.5,4 L4,7.5Z" fill="#555" stroke="#222" stroke-width="0.8"/></svg>
<span class="t" style="left:1310.70px;top:187px;color:#0000ff;font-size:16.5px;font-family:'Liberation Sans',sans-serif;font-weight:700;transform:scaleX(1.1470);-webkit-text-stroke:0.35px #0000ff;">Operaciones</span>
<div class="a" style="left:1434px;top:182px;width:162px;height:25px;background:#e5e5e5;border:1px solid #cfcfcf;border-bottom:none;border-radius:7px 7px 0 0;"></div>
<svg class="a" style="left:1443px;top:188px;" width="19" height="16" viewBox="0 0 19 16"><path d="M1,4 L5,4 Q7.5,4 9.5,8 Q11.5,12 14,12 L15,12 M1,12 L5,12 Q7.5,12 9.5,8 Q11.5,4 14,4 L15,4" fill="none" stroke="#8c8c8c" stroke-width="3.2"/>
<path d="M1,4 L5,4 Q7.5,4 9.5,8 Q11.5,12 14,12 L15,12 M1,12 L5,12 Q7.5,12 9.5,8 Q11.5,4 14,4 L15,4" fill="none" stroke="#e6e6e6" stroke-width="1.6"/>
<path d="M14,1 L18.5,4 L14,7Z M14,9 L18.5,12 L14,15Z" fill="#e6e6e6" stroke="#8c8c8c" stroke-width="0.9"/></svg>
<span class="t" style="left:1469.33px;top:187px;color:#0000ff;font-size:16.5px;font-family:'Liberation Sans',sans-serif;font-weight:700;transform:scaleX(1.1683);-webkit-text-stroke:0.35px #0000ff;">Disparadores</span>
<div class="a" style="left:304px;top:207px;width:272px;height:1px;background:#000;"></div>
<div class="a" style="left:656px;top:207px;width:944px;height:1px;background:#000;"></div>
<div class="a" style="left:576px;top:179px;width:80px;height:30px;background:#f5f5f5;border:1px solid #cfcfcf;border-bottom:none;border-radius:7px 7px 0 0;"></div>
<svg class="a" style="left:588px;top:186px;" width="20" height="20" viewBox="0 0 20 20"><path d="M5,1 L17,1 Q19,1 19,3 L19,4.5 L5,4.5Z" fill="#222"/>
<path d="M6,5 L4,12 M8.5,5 L6.5,12 M11,5 L9,12 M13.5,5 L11.5,12 M16,5 L14,12" stroke="#6a78c8" stroke-width="1"/>
<path d="M16.5,9.5 L19,12.5" stroke="#222" stroke-width="1.8"/>
<text x="0" y="18.5" font-family="Liberation Sans" font-weight="700" font-size="8.5" fill="#e0101a" textLength="15" lengthAdjust="spacingAndGlyphs">SQL</text></svg>
<span class="t" style="left:615.00px;top:185px;color:#0000ff;font-size:16.5px;font-family:'Liberation Sans',sans-serif;font-weight:700;transform:scaleX(1.0294);-webkit-text-stroke:0.35px #0000ff;">SQL</span>
<div class="a" style="left:311px;top:234px;width:1278px;height:420px;background:#e5e5e5;border:1px solid #000;border-bottom:none;"></div>
<div class="a" style="left:320px;top:222px;width:645px;height:20px;background:linear-gradient(#f5f5f5 0,#f5f5f5 12px,#e5e5e5 12px);"></div>
<span class="t" style="left:322.02px;top:226px;color:#444;font-size:16.5px;font-family:'Liberation Sans',sans-serif;font-weight:700;transform:scaleX(1.1790);-webkit-text-stroke:0.35px #444;">Ejecutar la(s) consulta(s) SQL en la tabla</span>
<span class="t" style="left:706.80px;top:226px;color:#0000ff;font-size:16.5px;font-family:'Liberation Sans',sans-serif;font-weight:700;transform:scaleX(1.1559);-webkit-text-stroke:0.35px #0000ff;">escuela_ejemplo.alumno</span>
<span class="t" style="left:933.27px;top:226px;color:#444;font-size:16.5px;font-family:'Liberation Sans',sans-serif;font-weight:700;transform:scaleX(1.1333);-webkit-text-stroke:0.35px #444;">:</span>
<svg class="a" style="left:949px;top:228px;" width="16" height="16" viewBox="0 0 16 16"><path d="M4.5,1 L10.5,1 L14.5,5 L14.5,11 L10.5,14.5 L4.5,14.5 L1,11 L1,5Z" fill="#cdcdf5" stroke="#222" stroke-width="1.5" stroke-linejoin="round"/><text x="4.2" y="12" font-family="Liberation Sans" font-size="11" fill="#333">?</text></svg>
<div class="a" style="left:320px;top:252px;width:869px;height:222px;background:#fff;"></div>
<div class="a" style="left:320px;top:252px;width:35px;height:222px;background:#f7f7f7;border-right:1px solid #dddddd;"></div>
<span class="t" style="left:343.50px;top:259px;color:#999;font-size:12px;font-family:'Liberation Mono',monospace;">1</span>
<span class="t" style="left:343.50px;top:271px;color:#999;font-size:12px;font-family:'Liberation Mono',monospace;">2</span>
<span class="t" style="left:343.50px;top:284px;color:#999;font-size:12px;font-family:'Liberation Mono',monospace;">3</span>
<span class="t" style="left:343.50px;top:296px;color:#999;font-size:12px;font-family:'Liberation Mono',monospace;">4</span>
<span class="t" style="left:343.50px;top:308px;color:#999;font-size:12px;font-family:'Liberation Mono',monospace;">5</span>
<span class="t" style="left:360.77px;top:259px;color:#000;font-size:12px;font-family:'Liberation Mono',monospace;transform:scaleX(1.0255);"><span style="color:#708">set</span> <span style="color:#05a">@reprobados</span> := <span style="color:#164">5</span>;</span>
<span class="t" style="left:360.77px;top:271px;color:#000;font-size:12px;font-family:'Liberation Mono',monospace;transform:scaleX(1.0255);"><span style="color:#708">set</span> <span style="color:#05a">@aprobados</span> := <span style="color:#164">6</span>;</span>
<span class="t" style="left:360.77px;top:284px;color:#000;font-size:12px;font-family:'Liberation Mono',monospace;transform:scaleX(1.0255);"><span style="color:#708">set</span> <span style="color:#05a">@excelente</span> :=<span style="color:#164">10</span>;</span>
<span class="t" style="left:361.80px;top:308px;color:#000;font-size:12px;font-family:'Liberation Mono',monospace;transform:scaleX(1.0255);"><span style="color:#708">SELECT</span> * <span style="color:#708">FROM</span> alumno <span style="color:#708">WHERE</span> calificacion &lt;= <span style="color:#05a">@reprobados</span>;</span>
<div class="a" style="left:769px;top:308px;width:1px;height:11px;background:#000;"></div>
<svg class="a" style="left:1176px;top:461px;" width="13" height="13" viewBox="0 0 13 13"><path d="M1,12.5 L12.5,1 M5,12.5 L12.5,5 M9,12.5 L12.5,9" stroke="#7a7a7a" stroke-width="1.1"/></svg>
<div class="a" style="left:320px;top:474px;width:82px;height:27px;background:#ebebef;border:1px solid #8b8ba0;border-radius:4px;"></div>
<span class="t" style="left:326.47px;top:480px;color:#000;font-size:16px;font-family:'Liberation Sans',sans-serif;transform:scaleX(0.9319);-webkit-text-stroke-width:0;">SELECT *</span>
<div class="a" style="left:402px;top:474px;width:68px;height:27px;background:#ebebef;border:1px solid #8b8ba0;border-radius:4px;"></div>
<span class="t" style="left:408.72px;top:480px;color:#000;font-size:16px;font-family:'Liberation Sans',sans-serif;transform:scaleX(0.8803);-webkit-text-stroke-width:0;">SELECT</span>
<div class="a" style="left:472px;top:474px;width:65px;height:27px;background:#ebebef;border:1px solid #8b8ba0;border-radius:4px;"></div>
<span class="t" style="left:477.49px;top:480px;color:#000;font-size:16px;font-family:'Liberation Sans',sans-serif;transform:scaleX(0.9123);-webkit-text-stroke-width:0;">INSERT</span>
<div class="a" style="left:538px;top:474px;width:73px;height:27px;background:#ebebef;border:1px solid #8b8ba0;border-radius:4px;"></div>
<span class="t" style="left:544.55px;top:480px;color:#000;font-size:16px;font-family:'Liberation Sans',sans-serif;transform:scaleX(0.9468);-webkit-text-stroke-width:0;">UPDATE</span>
<div class="a" style="left:613px;top:474px;width:67px;height:27px;background:#ebebef;border:1px solid #8b8ba0;border-radius:4px;"></div>
<span class="t" style="left:618.40px;top:480px;color:#000;font-size:16px;font-family:'Liberation Sans',sans-serif;transform:scaleX(0.8984);-webkit-text-stroke-width:0;">DELETE</span>
<div class="a" style="left:681px;top:474px;width:66px;height:27px;background:#ebebef;border:1px solid #8b8ba0;border-radius:4px;"></div>
<span class="t" style="left:687.00px;top:480px;color:#000;font-size:16px;font-family:'Liberation Sans',sans-serif;-webkit-text-stroke-width:0;">Limpiar</span>
<div class="a" style="left:748px;top:474px;width:73px;height:27px;background:#ebebef;border:1px solid #8b8ba0;border-radius:4px;"></div>
<span class="t" style="left:752.97px;top:480px;color:#000;font-size:16px;font-family:'Liberation Sans',sans-serif;transform:scaleX(1.0345);-webkit-text-stroke-width:0;">Formato</span>
<div class="a" style="left:823px;top:474px;width:353px;height:27px;background:#ebebef;border:1px solid #8b8ba0;border-radius:4px;"></div>
<span class="t" style="left:829.00px;top:480px;color:#000;font-size:16px;font-family:'Liberation Sans',sans-serif;transform:scaleX(0.9971);-webkit-text-stroke-width:0;">Obtener consulta almacenada automáticamente</span>
<span class="t" style="left:1214.40px;top:254px;color:#000;font-size:16.5px;font-family:'Liberation Sans',sans-serif;transform:scaleX(1.0973);-webkit-text-stroke-width:0.25px;">Columnas</span>
<div class="a" style="left:1215px;top:272px;width:365px;height:345px;background:#fff;border:1px solid #8b8ba0;border-radius:2px;"></div>
<span class="t" style="left:1221.74px;top:280px;color:#000;font-size:16.5px;font-family:'Liberation Sans',sans-serif;transform:scaleX(0.9647);-webkit-text-stroke-width:0;">IdAlumno</span>
<span class="t" style="left:1221.70px;top:306px;color:#000;font-size:16.5px;font-family:'Liberation Sans',sans-serif;-webkit-text-stroke-width:0;">Nombre</span>
<span class="t" style="left:1221.76px;top:332px;color:#000;font-size:16.5px;font-family:'Liberation Sans',sans-serif;transform:scaleX(0.9417);-webkit-text-stroke-width:0;">Fecha_ingreso</span>
<span class="t" style="left:1222.70px;top:358px;color:#000;font-size:16.5px;font-family:'Liberation Sans',sans-serif;transform:scaleX(0.9588);-webkit-text-stroke-width:0;">calificacion</span>
<span class="t" style="left:1221.75px;top:384px;color:#000;font-size:16.5px;font-family:'Liberation Sans',sans-serif;transform:scaleX(0.9500);-webkit-text-stroke-width:0;">IdSalon</span>
<div class="a" style="left:1215px;top:618px;width:31px;height:26px;background:#ebebef;border:1px solid #8b8ba0;border-radius:4px;"></div>
<span class="t" style="left:1222.00px;top:622px;color:#000;font-size:16.5px;font-family:'Liberation Sans',sans-serif;transform:scaleX(0.8579);-webkit-text-stroke-width:0;">&lt;&lt;</span>
<div class="a" style="left:311px;top:653px;width:1278px;height:45px;background:#d3dce3;border:1px solid #000;"></div>
<span class="t" style="left:319.85px;top:666px;color:#000;font-size:16.5px;font-family:'Liberation Sans',sans-serif;transform:scaleX(1.1511);-webkit-text-stroke-width:0.25px;">[ Delimitador</span>
<div class="a" style="left:433px;top:662px;width:53px;height:27px;background:#fff;border:1px solid #8b8b9b;border-radius:3px;"></div>
<span class="t" style="left:436.90px;top:669px;color:#000;font-size:16.5px;font-family:'Liberation Sans',sans-serif;-webkit-text-stroke-width:0.25px;">;</span>
<span class="t" style="left:492.90px;top:666px;color:#000;font-size:16.5px;font-family:'Liberation Sans',sans-serif;transform:scaleX(1.0250);-webkit-text-stroke-width:0.25px;">]</span>
<svg class="a" style="left:503px;top:667px;" width="17" height="17" viewBox="0 0 17 17"><rect x="0" y="0" width="16" height="16" rx="3" fill="#4a8fdb"/><path d="M3.5,8 L6.8,11.3 L12.8,5" fill="none" stroke="#fff" stroke-width="2"/></svg>
<span class="t" style="left:522.67px;top:666px;color:#000;font-size:16.5px;font-family:'Liberation Sans',sans-serif;transform:scaleX(1.1268);-webkit-text-stroke-width:0.25px;">Mostrar esta consulta otra vez</span>
<div class="a" style="left:778px;top:668px;width:16px;height:16px;background:#fff;border:1px solid #8b8b9b;border-radius:3px;"></div>
<span class="t" style="left:797.57px;top:666px;color:#000;font-size:16.5px;font-family:'Liberation Sans',sans-serif;transform:scaleX(1.1281);-webkit-text-stroke-width:0.25px;">Mantener la caja de texto con la consulta</span>
<div class="a" style="left:1142px;top:668px;width:16px;height:16px;background:#fff;border:1px solid #8b8b9b;border-radius:3px;"></div>
<span class="t" style="left:1161.87px;top:666px;color:#000;font-size:16.5px;font-family:'Liberation Sans',sans-serif;transform:scaleX(1.1268);-webkit-text-stroke-width:0.25px;">Deshacer («rollback») al finalizar</span>
<div class="a" style="left:1497px;top:662px;width:83px;height:27px;background:#ebebef;border:1px solid #8b8ba0;border-radius:4px;"></div>
<span class="t" style="left:1503.03px;top:667px;color:#000;font-size:16.5px;font-family:'Liberation Sans',sans-serif;transform:scaleX(0.9718);-webkit-text-stroke-width:0;">Continuar</span>
<div class="a" style="left:312px;top:715px;width:1275px;height:1px;background:#c8c8c8;"></div>
<svg class="a" style="left:1567px;top:718px;" width="21" height="21" viewBox="0 0 21 21"><rect x="1.5" y="3.5" width="17" height="16" rx="2" fill="#f0f0f0" stroke="#c8c8c8"/><rect x="3" y="5" width="12" height="2" fill="#2a5ab0"/><circle cx="17" cy="4" r="3" fill="#f5e31a"/></svg>
<div class="a" style="left:304px;top:831px;width:94px;height:23px;background:#d0d0d0;border:1px solid #bababa;border-bottom:none;border-radius:0 4px 0 0;"></div>
<svg class="a" style="left:310px;top:835px;" width="18" height="18" viewBox="0 0 18 18"><defs><linearGradient id="cong" x1="0" y1="0" x2="1" y2="1"><stop offset="0" stop-color="#111"/><stop offset=".6" stop-color="#333"/><stop offset="1" stop-color="#666"/></linearGradient></defs><rect x="0.5" y="0.5" width="17" height="17" rx="2" fill="#e8e8e8" stroke="#bdbdbd"/><rect x="2.5" y="1.5" width="13" height="3" fill="#fff"/><rect x="2.5" y="4.5" width="12" height="10" fill="url(#cong)"/></svg>
<span class="t" style="left:327.93px;top:836px;color:#000;font-size:16.5px;font-family:'Liberation Sans',sans-serif;transform:scaleX(1.0667);-webkit-text-stroke-width:0.25px;">Consola</span>
<div class="a" style="left:0px;top:854px;width:1600px;height:1px;background:#5e5e5e;"></div>
<div class="a" style="left:0px;top:855px;width:1600px;height:45px;background:linear-gradient(#efefef,#dcdcdc);"></div>
<div class="a" style="left:5px;top:860px;width:30px;height:35px;background:#f2f2f2;border:1px solid #c8c8c8;border-radius:3px;"></div>
<svg class="a" style="left:12px;top:870px;" width="16" height="16" viewBox="0 0 16 16"><path d="M2,8.5 L2,14 L8.5,14 L8.5,11" fill="none" stroke="#2e3436" stroke-width="2.3"/><rect x="8.3" y="2.3" width="6.5" height="5.6" fill="none" stroke="#2e3436" stroke-width="2.3"/></svg>
<div class="a" style="left:39px;top:858px;width:326px;height:39px;background:#cdcdcd;border:1px solid #bdbdbd;border-radius:3px;"></div>
<svg class="a" style="left:46px;top:865px;" width="24" height="25" viewBox="0 0 24 25"><defs><radialGradient id="ffg" cx="0.7" cy="0.2" r="0.95"><stop offset="0" stop-color="#fff44f"/><stop offset="0.35" stop-color="#ffb33a"/><stop offset="0.65" stop-color="#ff5a2a"/><stop offset="1" stop-color="#e31587"/></radialGradient><radialGradient id="ffp" cx="0.4" cy="0.3" r="0.8"><stop offset="0" stop-color="#b833e1"/><stop offset="1" stop-color="#5b4ad8"/></radialGradient></defs>
<path d="M4,7 Q2,10 2,14 Q2,24 12,24 Q22,24 22,13 Q22,6 17,1.5 Q18,5 17,7 Q14,3 10,4.5 Q12,5.5 12.5,7 Q9,6 6.5,8.5 Q5.5,7.5 6,5Z" fill="url(#ffg)"/>
<circle cx="11.8" cy="14" r="5.3" fill="url(#ffp)"/><path d="M6.5,11 Q9,9 13,10 Q10,11.5 9.5,13Z" fill="#ff9a30"/></svg>
<span class="t" style="left:73.77px;top:869px;color:#2e3436;font-size:18px;font-family:'Liberation Sans',sans-serif;transform:scaleX(0.9277);">127.0.0.1 / localhost / escuela_ejem...</span>
<div class="a" style="left:1362px;top:860px;width:53px;height:34px;background:#ececec;border:1px solid #c9c9c9;border-radius:3px 0 0 3px;"></div>
<div class="a" style="left:1420px;top:860px;width:52px;height:34px;background:#f6f5f4;border:2px solid #7c7c7c;"></div>
<div class="a" style="left:1476px;top:860px;width:53px;height:34px;background:#dadada;border:1px solid #cfcfcf;"></div>
<div class="a" style="left:1533px;top:860px;width:54px;height:34px;background:#dadada;border:1px solid #cfcfcf;border-radius:0 3px 3px 0;"></div></body></html>
